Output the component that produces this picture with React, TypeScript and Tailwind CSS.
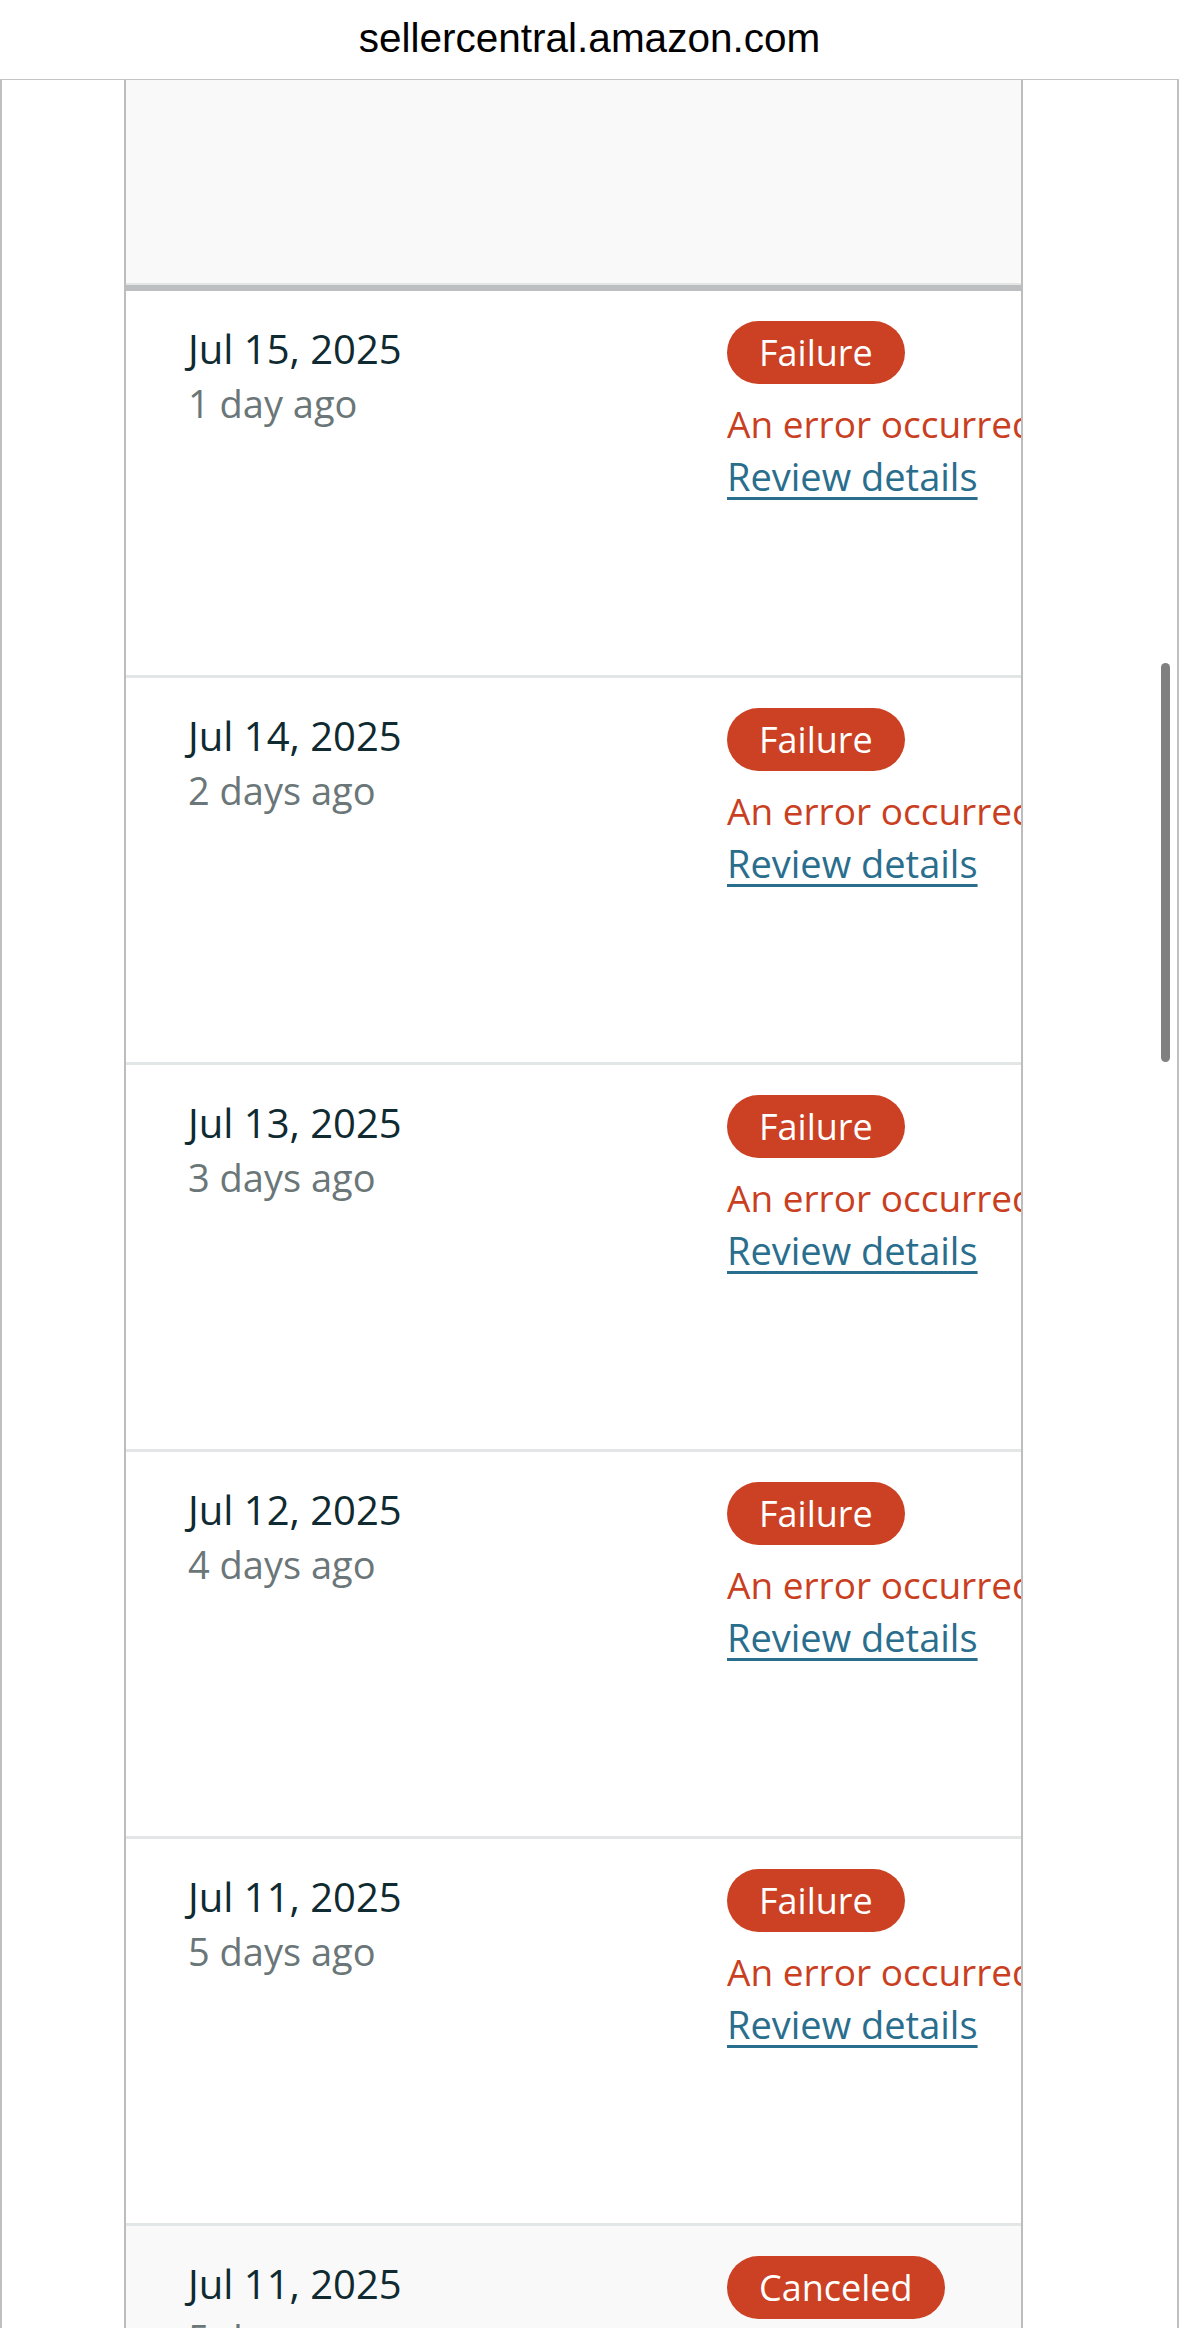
const rows = [
  { date: "Jul 15, 2025", ago: "1 day ago" },
  { date: "Jul 14, 2025", ago: "2 days ago" },
  { date: "Jul 13, 2025", ago: "3 days ago" },
  { date: "Jul 12, 2025", ago: "4 days ago" },
  { date: "Jul 11, 2025", ago: "5 days ago" },
];

function FailureRow({ date, ago }: { date: string; ago: string }) {
  return (
    <div className="flex h-[387px] bg-white border-b-[3px] border-[#e3e6e6]">
      <div className="w-[601px] shrink-0 pl-[62px] pt-[30px]">
        <div className="text-[40px] leading-[55px] text-[#0f2a31]">{date}</div>
        <div className="text-[38px] leading-[55px] text-[#6a7677]">{ago}</div>
      </div>
      <div className="min-w-0 flex-1 overflow-hidden pt-[30px]">
        <span className="inline-flex h-[63px] items-center rounded-full bg-[#cc4123] px-[32px] text-[36px] text-white">
          Failure
        </span>
        <div className="mt-[13px] whitespace-nowrap text-[37px] leading-[53px] text-[#c93f1f]">
          An error occurred
        </div>
        <a className="text-[38px] leading-[52px] text-[#2a6e8e] underline decoration-[3px] underline-offset-[6px]">
          Review details
        </a>
      </div>
    </div>
  );
}

export default function App() {
  return (
    <div className="relative h-[2328px] w-[1179px] overflow-hidden bg-white font-['Open_Sans',sans-serif]">
      <header className="flex h-[80px] items-center justify-center border-b border-[#c4c4c4] bg-white pb-[2px]">
        <span className="font-['Liberation_Sans',sans-serif] text-[40.5px] text-black">
          sellercentral.amazon.com
        </span>
      </header>

      <div className="h-full border-x-2 border-[#bfbfbf]">
        <div className="ml-[122px] w-[899px] border-x-2 border-[#bdbdbd]">
          <div className="h-[203px] bg-[#f9f9f9]" />
          <div className="h-[2px] bg-[#e4e6e6]" />
          <div className="h-[6px] bg-[#bbbfbf]" />

          {rows.map((r) => (
            <FailureRow key={r.date + r.ago} date={r.date} ago={r.ago} />
          ))}

          <div className="flex h-[400px] bg-[#f9f9f9]">
            <div className="w-[601px] shrink-0 pl-[62px] pt-[30px]">
              <div className="text-[40px] leading-[55px] text-[#0f2a31]">Jul 11, 2025</div>
              <div className="text-[38px] leading-[55px] text-[#6a7677]">5 days ago</div>
            </div>
            <div className="min-w-0 flex-1 overflow-hidden pt-[30px]">
              <span className="inline-flex h-[63px] items-center rounded-full bg-[#cc4123] px-[32px] text-[36px] text-white">
                Canceled
              </span>
            </div>
          </div>
        </div>
      </div>

      {/* scroll indicator */}
      <div className="absolute left-[1161px] top-[663px] h-[399px] w-[9px] rounded-full bg-[#808080]" />
    </div>
  );
}
